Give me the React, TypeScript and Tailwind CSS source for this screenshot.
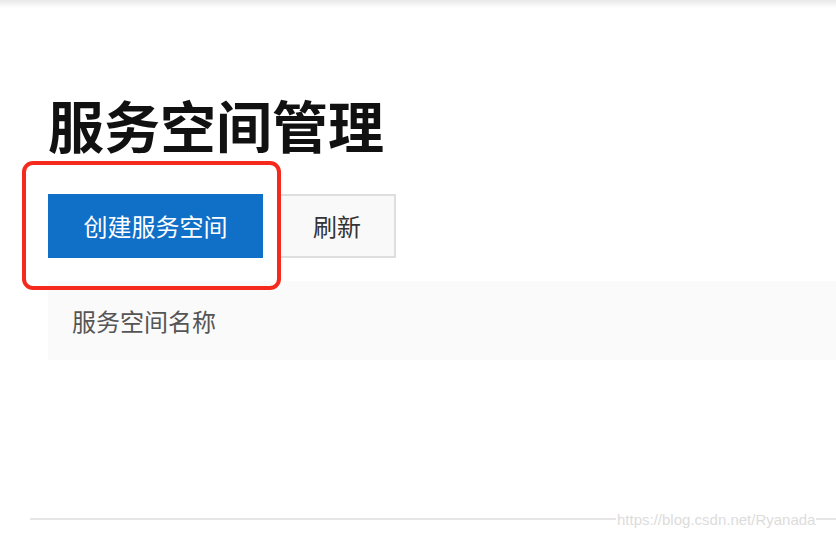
import React from "react";

export default function App() {
  const font = { fontFamily: '"Noto Sans CJK SC", "Noto Sans", sans-serif' };
  return (
    <div className="relative w-[836px] h-[540px] overflow-hidden bg-white" style={font}>
      <div className="absolute left-0 top-0 w-full h-[8px] bg-gradient-to-b from-[#e8e8e8] to-white" />
      <div className="pl-[48px] pt-[88px]">
        <h1 className="text-[56px] leading-[72px] font-bold text-[#111] m-0">服务空间管理</h1>
        <div className="flex mt-[34px]">
          <button className="w-[215px] h-[64px] bg-[#1070c8] text-white text-[24px] leading-none">创建服务空间</button>
          <button className="ml-[15px] w-[118px] h-[64px] bg-[#f9f9f9] border-2 border-[#dedede] text-[#333] text-[24px] leading-none">刷新</button>
        </div>
        <div className="mt-[23px] h-[79px] bg-[#fafafa] flex items-center pl-[24px] text-[24px] text-[#555]">服务空间名称</div>
        <div className="mt-[158px] h-[2px] bg-[#e6e6e6] -ml-[18px]" />
      </div>
      <div className="absolute left-[22px] top-[161px] w-[259px] h-[129px] border-[4px] border-[#f52a1c] rounded-[11px]" />
      <div
        className="absolute left-[616px] top-[509px] text-[15px] text-[#dcdcdc] bg-white px-[1px]"
        style={{ fontFamily: '"Liberation Sans", Arial, sans-serif' }}
      >
        https://blog.csdn.net/Ryanada
      </div>
    </div>
  );
}
